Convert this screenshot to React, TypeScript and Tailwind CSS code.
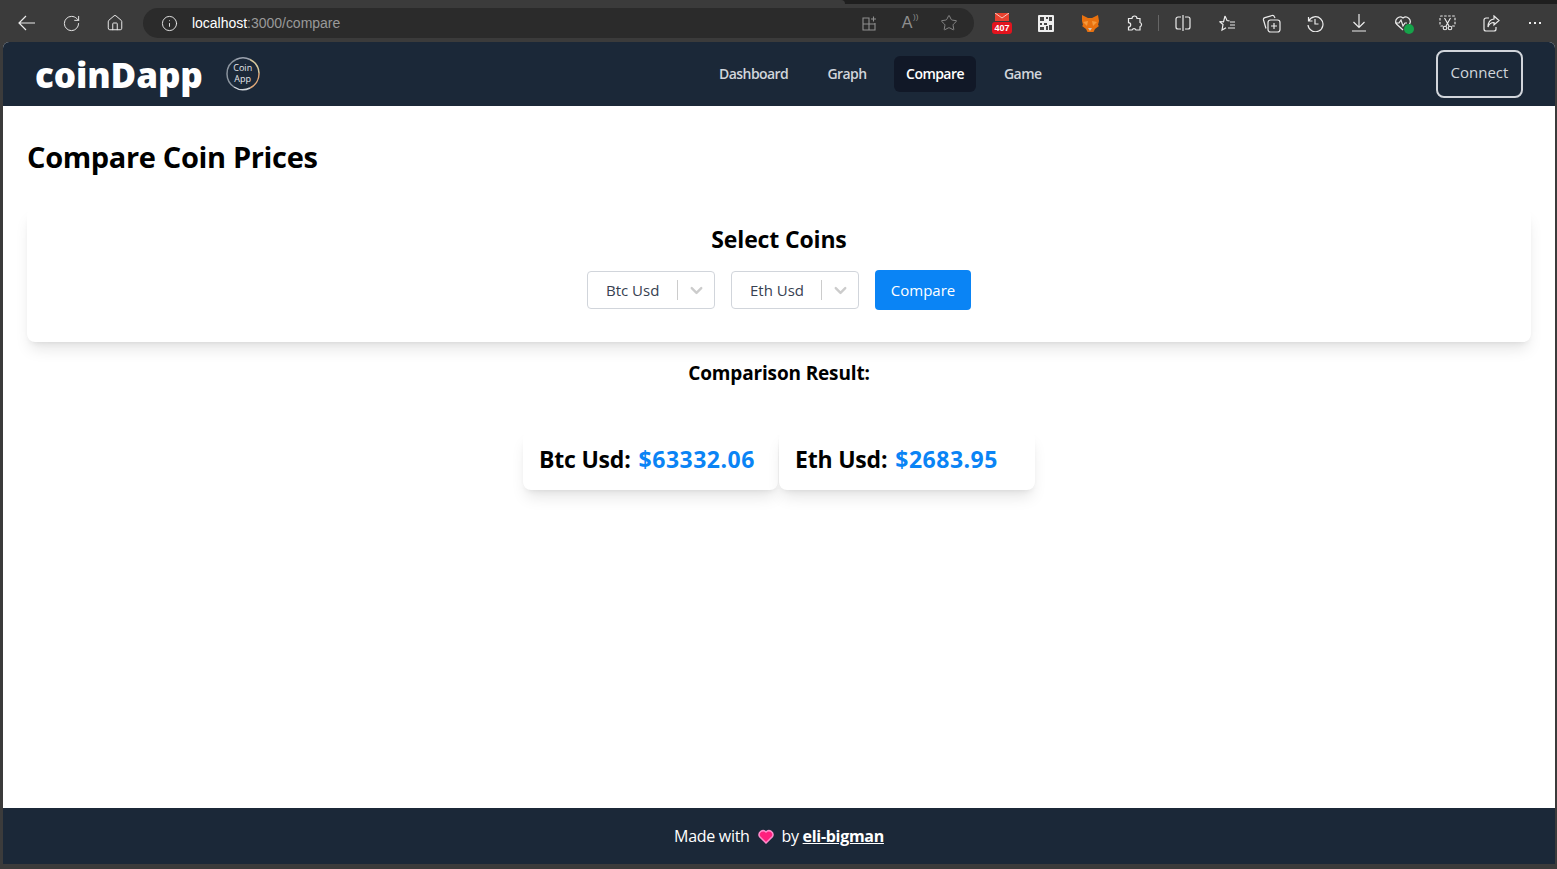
import { Info, RotateCw, Home, Star, ChevronDown } from "lucide-react";

const font = "font-['Open_Sans','Noto_Sans',sans-serif]";

function Slot({ children }: { children: React.ReactNode }) {
  return <div className="flex items-center justify-center w-[44px] h-full">{children}</div>;
}

function Browser() {
  return (
    <div className="flex flex-col shrink-0">
      <div className="flex h-1 bg-[#1f1f1f]">
        <div className="w-[845px] bg-[#3b3b3b] rounded-tr-md" />
      </div>
      <div className="flex items-center h-[38px] bg-[#3b3b3b] text-[#ececec]">
        <div className="flex items-center w-[143px] pl-[18px]">
          <svg width="18" height="16" viewBox="0 0 18 16" fill="none" stroke="currentColor" strokeWidth="1.2">
            <path d="M1 8h16M8 1L1 8l7 7" />
          </svg>
          <RotateCw size={19} strokeWidth={1.2} className="ml-[26px]" />
          <Home size={18} strokeWidth={1.3} className="ml-[25px]" />
        </div>
        <div className="flex items-center w-[831px] h-[30px] rounded-full bg-[#2b2b2b] pl-[18px] pr-[5px]">
          <Info size={17} strokeWidth={1.3} />
          <span className="ml-[14px] text-[14px] tracking-[-0.02px] font-['Liberation_Sans',sans-serif] text-white">
            localhost<span className="text-[#999]">:3000/compare</span>
          </span>
          <div className="ml-auto flex items-center text-[#8f8f8f]">
            <div className="flex justify-center w-10">
              <svg width="17" height="17" viewBox="0 0 17 17" fill="none" stroke="currentColor" strokeWidth="1.1">
                <path d="M2 3h6v12H2zM2 9h12v6H8M10 4h5M12.5 1.5v5M14 9V8" />
              </svg>
            </div>
            <div className="flex justify-center w-10 pr-[4px]">
              <span className="relative text-[16px] leading-none font-['Liberation_Sans',sans-serif]">
                A<span className="absolute -top-[2px] -right-[6px] text-[8px]">))</span>
              </span>
            </div>
            <div className="flex justify-center w-10">
              <Star size={18} strokeWidth={1.2} />
            </div>
          </div>
        </div>
        <div className="flex items-center h-full pl-[6px]">
          <Slot>
            <div className="flex flex-col items-center w-5 h-6 pt-[2px]">
              <svg width="14" height="8" viewBox="0 0 14 8">
                <path d="M0 0h14v8H0z" fill="#e8412f" />
                <path d="M0 0l7 5 7-5" fill="none" stroke="#f7c9c0" strokeWidth="1" />
              </svg>
              <div className="flex items-center justify-center w-5 h-[12px] mt-px bg-[#e3141e] rounded-[3px] text-white text-[9px] font-bold leading-none font-['Liberation_Sans',sans-serif]">407</div>
            </div>
          </Slot>
          <Slot>
            <svg width="16" height="17" viewBox="0 0 16 17">
              <rect width="16" height="17" rx="1" fill="#eee" />
              <path d="M2 2h4v4H2zM8 2h2v2H8zM11 2h3v4h-3zM2 8h2v2H2zM6 8h3v2H6zM2 12h4v3H2zM8 11h2v4H8zM11 10h3v5h-3z" fill="#444" />
            </svg>
          </Slot>
          <Slot>
            <svg width="18" height="17" viewBox="0 0 18 17">
              <path d="M1 0l6 3h4l6-3 1 6-1 4 1 1-4 3-2 4H7l-2-4-4-3 1-1-1-4z" fill="#e8710f" />
              <path d="M2 7l5-1-1 5zM16 7l-5-1 1 5z" fill="#f59a3c" />
              <path d="M7 13h4l-2 3z" fill="#d8c4b0" />
            </svg>
          </Slot>
          <Slot>
            <svg width="17" height="17" viewBox="0 0 17 17" fill="none" stroke="currentColor" strokeWidth="1.2">
              <path d="M6 3.5a2.5 2.5 0 0 1 5 0H14v4a2.2 2.2 0 0 1 0 4.2V15h-4a2.2 2.2 0 0 0-4 0H2.5v-3a2.2 2.2 0 0 0 0-4.4V3.5z" />
            </svg>
          </Slot>
          <div className="flex items-center justify-center w-[5px]">
            <div className="w-px h-4 bg-[#666]" />
          </div>
          <Slot>
            <svg width="16" height="18" viewBox="0 0 16 18" fill="none" stroke="currentColor" strokeWidth="1.2">
              <path d="M8 1v16M6 3H3a2 2 0 0 0-2 2v8a2 2 0 0 0 2 2h3M10 3h3a2 2 0 0 1 2 2v8a2 2 0 0 1-2 2h-3" />
            </svg>
          </Slot>
          <Slot>
            <svg width="18" height="17" viewBox="0 0 18 17" fill="none" stroke="currentColor" strokeWidth="1.2">
              <path d="M7 1l2 4.500 2.500.3M1.500 6.500l4 .3L7 1M1.500 6.500l3.500 3-1 5.500 4-2.300M12 7h5M12 10h5M10 13h7" />
            </svg>
          </Slot>
          <Slot>
            <svg width="19" height="19" viewBox="0 0 19 19" fill="none" stroke="currentColor" strokeWidth="1.2">
              <rect x="6" y="6" width="12" height="12" rx="2.5" />
              <path d="M12 9v6M9 12h6M4 14.500L1.500 6a2 2 0 0 1 1.400-2.400L10 1.500a2 2 0 0 1 2.400 1.200L13 4" />
            </svg>
          </Slot>
          <Slot>
            <svg width="18" height="18" viewBox="0 0 18 18" fill="none" stroke="currentColor" strokeWidth="1.2">
              <path d="M2.500 3v4h4M2.700 7A7.500 7.500 0 1 1 2 11M9 5v5h3.500" />
            </svg>
          </Slot>
          <Slot>
            <svg width="14" height="18" viewBox="0 0 14 18" fill="none" stroke="currentColor" strokeWidth="1.2">
              <path d="M7 0v13M1.500 8L7 13.500 12.500 8M0 17h14" />
            </svg>
          </Slot>
          <Slot>
            <div className="relative">
              <svg width="18" height="17" viewBox="0 0 18 17" fill="none" stroke="currentColor" strokeWidth="1.2">
                <path d="M9 15L2.500 9A4.500 4.500 0 0 1 9 3a4.500 4.500 0 0 1 6.500 6M1 8h4l2-3 2 6 2-3h2" />
              </svg>
              <div className="absolute -right-[2px] -bottom-[2px] flex items-center justify-center w-[10px] h-[10px] rounded-full bg-[#16a34a]" />
            </div>
          </Slot>
          <Slot>
            <svg width="17" height="16" viewBox="0 0 17 16" fill="none" stroke="currentColor" strokeWidth="1.1">
              <path d="M4 11H2a1 1 0 0 1-1-1V2a1 1 0 0 1 1-1h13a1 1 0 0 1 1 1v8a1 1 0 0 1-1 1h-2" strokeDasharray="2.500 1.500" />
              <path d="M5.500 3l4.500 8M11.500 3L7 11" />
              <circle cx="6" cy="13" r="1.800" />
              <circle cx="11" cy="13" r="1.800" />
            </svg>
          </Slot>
          <Slot>
            <svg width="17" height="17" viewBox="0 0 17 17" fill="none" stroke="currentColor" strokeWidth="1.2">
              <path d="M6 3H3a2 2 0 0 0-2 2v9a2 2 0 0 0 2 2h8a2 2 0 0 0 2-2v-2M11 1l5 4.500-5 4.500V7.500C8 7.500 6 9 5 12c0-5 2-7.500 6-8z" />
            </svg>
          </Slot>
          <Slot>
            <div className="flex gap-[3px]">
              <div className="w-[2px] h-[2px] bg-[#ececec]" />
              <div className="w-[2px] h-[2px] bg-[#ececec]" />
              <div className="w-[2px] h-[2px] bg-[#ececec]" />
            </div>
          </Slot>
        </div>
      </div>
    </div>
  );
}

function Logo() {
  return (
    <div className="relative flex flex-col items-center justify-center w-9 h-9 pb-[3px] text-[9px] leading-[11px] font-medium text-[#e5e7eb]">
      <svg width="36" height="36" viewBox="0 0 36 36" fill="none" strokeWidth="1.5" className="absolute inset-0">
        <path d="M11 3.500A16 16 0 0 1 25 3.500" stroke="#9ca3af" />
        <path d="M25 3.500A16 16 0 0 1 34 17" stroke="#d6c79a" />
        <path d="M34 17A16 16 0 0 1 25 32" stroke="#e0a878" />
        <path d="M25 32A16 16 0 0 1 9 31" stroke="#d1d5db" />
        <path d="M9 31A16 16 0 0 1 2 18A16 16 0 0 1 11 3.500" stroke="#8b949e" />
      </svg>
      <span>Coin</span>
      <span>App</span>
    </div>
  );
}

function Select({ label }: { label: string }) {
  return (
    <div className="flex items-center w-[128px] h-[38px] rounded-[4px] border border-[#d1d5db] bg-white">
      <span className="w-[89px] pl-[18px] text-[#374151] text-[15px]">{label}</span>
      <div className="w-px h-5 bg-[#ccc]" />
      <ChevronDown size={19} strokeWidth={3} className="ml-[9px] text-[#ccc]" />
    </div>
  );
}

function ResultCard({ label, price, width }: { label: string; price: string; width: string }) {
  return (
    <div className={`${width} h-[59px] flex items-center pl-[16px] pb-[2px] bg-white rounded-lg shadow-lg text-[23px] font-bold text-black tracking-[-0.2px]`}>
      {label}:<span className="ml-[8px] text-[#0a84f5] tracking-[0.5px]">{price}</span>
    </div>
  );
}

export default function App() {
  return (
    <div className={`flex flex-col h-[869px] bg-[#3b3b3b] overflow-hidden ${font}`}>
      <Browser />
      <div className="flex flex-col flex-1 ml-[3px] mr-[2px] mb-[5px] rounded-t-md overflow-hidden bg-white">
        <nav className="flex items-center shrink-0 h-16 bg-[#1b2838]">
          <div className="flex items-center w-[716px] pl-8">
            <span className="text-[35px] font-extrabold tracking-[-0.1px] text-white leading-none">coinDapp</span>
            <div className="ml-[22px]"><Logo /></div>
          </div>
          <div className="flex items-center text-[14px] font-semibold tracking-[-0.55px] text-[#d1d5db]">
            <a className="w-[68px] pb-[2px] text-center whitespace-nowrap">Dashboard</a>
            <a className="ml-[40px] pb-[2px] w-[40px] text-center">Graph</a>
            <a className="ml-[27px] w-[82px] h-9 pb-[2px] flex items-center justify-center rounded-md bg-[#111827] text-white">Compare</a>
            <a className="ml-[28px] pb-[2px]">Game</a>
          </div>
          <button className="ml-auto mr-8 w-[87px] h-12 pb-[3px] rounded-lg border-2 border-[#d1d5db] text-[#d1d5db] text-[15px]">Connect</button>
        </nav>
        <main className="flex-1 px-6 pt-[31px]">
          <h1 className="text-[29px] leading-[40px] font-bold text-black tracking-[-0.35px]">Compare Coin Prices</h1>
          <section className="flex flex-col items-center mt-[31px] h-[134px] rounded-lg bg-white shadow-lg">
            <h2 className="mt-[15px] text-[23px] leading-[32px] font-bold text-black tracking-[-0.15px]">Select Coins</h2>
            <div className="flex items-center gap-4 mt-[15px]">
              <Select label="Btc Usd" />
              <Select label="Eth Usd" />
              <button className="w-24 h-10 rounded-[4px] bg-[#0a84f5] text-white text-[15px]">Compare</button>
            </div>
          </section>
          <h3 className="mt-[17px] text-center text-[19px] leading-[28px] font-bold text-black tracking-[-0.15px]">Comparison Result:</h3>
          <div className="flex justify-center mt-[44px]">
            <ResultCard label="Btc Usd" price="$63332.06" width="w-[255px]" />
            <div className="w-px" />
            <ResultCard label="Eth Usd" price="$2683.95" width="w-[256px]" />
          </div>
        </main>
        <footer className="flex items-center justify-center shrink-0 h-14 bg-[#1b2838] text-white text-[16px] tracking-[-0.3px]">
          <span>Made with</span>
          <svg width="16" height="15" viewBox="0 0 16 15" className="mx-[8px]">
            <path d="M8 14L1.500 7.500A4 4 0 0 1 8 3a4 4 0 0 1 6.500 4.500z" fill="#ff1f7d" stroke="#ff8ccb" strokeWidth="1.5" />
          </svg>
          <span>by <a className="font-bold underline">eli-bigman</a></span>
        </footer>
      </div>
    </div>
  );
}
